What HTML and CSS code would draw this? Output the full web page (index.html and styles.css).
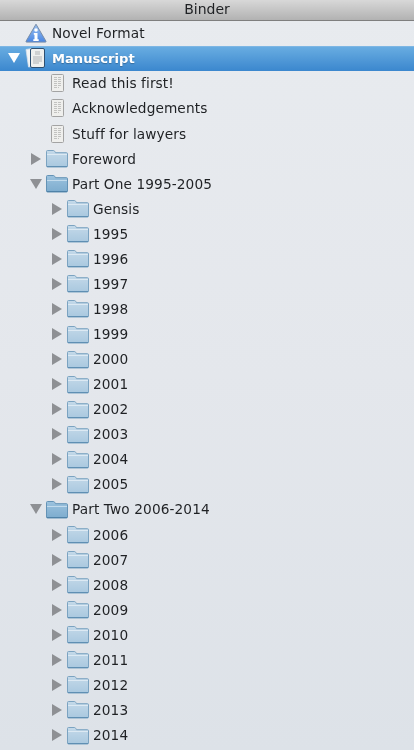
FILE: index.html
```html
<!DOCTYPE html>
<html lang="en">
<head>
    <meta charset="UTF-8">
    <meta name="viewport" content="width=device-width, initial-scale=1.0">
    <title>Binder</title>
    <link rel="stylesheet" href="styles.css">
</head>
<body>
    <!-- shared icons -->
    <svg class="defs" width="0" height="0">
        <defs>
            <linearGradient id="folderBody" x1="0" y1="0" x2="0" y2="1">
                <stop offset="0" stop-color="#c4d9e9"/>
                <stop offset="1" stop-color="#a9c8df"/>
            </linearGradient>
            <linearGradient id="folderOpen" x1="0" y1="0" x2="0" y2="1">
                <stop offset="0" stop-color="#9cc2de"/>
                <stop offset="1" stop-color="#7dacce"/>
            </linearGradient>
            <linearGradient id="warnBody" x1="0" y1="0" x2="0" y2="1">
                <stop offset="0" stop-color="#9cc2f2"/>
                <stop offset="1" stop-color="#4a86e2"/>
            </linearGradient>
            <symbol id="folder" viewBox="0 0 22 19">
                <path d="M.5 17V2.500q0-1 1-1h6q.8 0 1.300 1l.7 1.200h11q1 0 1 1V17q0 1-1 1h-19q-1 0-1-1z" fill="url(#folderBody)" stroke="#7ba3c1"/>
                <path d="M1 5.500h20" stroke="#dce9f3" fill="none"/>
                <path d="M1 17.500h20" stroke="#5f8fb3" fill="none"/>
            </symbol>
            <symbol id="folder-open" viewBox="0 0 22 19">
                <path d="M.5 17V2.500q0-1 1-1h6q.8 0 1.300 1l.7 1.200h11q1 0 1 1V17q0 1-1 1h-19q-1 0-1-1z" fill="url(#folderOpen)" stroke="#6493b6"/>
                <path d="M1 6.500h20" stroke="#c3dbec" fill="none"/>
                <path d="M1 17.500h20" stroke="#4f82a8" fill="none"/>
            </symbol>
            <symbol id="doc" viewBox="0 0 13 18">
                <rect x=".5" y=".5" width="12" height="17" rx="1" fill="#efefed" stroke="#a3a3a3"/>
                <path d="M3 3.500h7M3 5.500h7M3 7.500h7M3 9.500h7M3 11.500h7M3 13.500h5" stroke="#c2c2c0" stroke-dasharray="3 1"/>
            </symbol>
        </defs>
    </svg>

    <div class="binder">
        <div class="binder-title">Binder</div>

        <div class="row level-0">
            <span class="arrow"></span>
            <span class="icon">
                <svg width="22" height="20" viewBox="0 0 22 20">
                    <path d="M11 1.200L21 18.300q.3.800-.6.800H1.600q-.9 0-.6-.8z" fill="url(#warnBody)" stroke="#7a8ea8"/>
                    <circle cx="11" cy="7" r="1.800" fill="#fff"/>
                    <path d="M8.800 10h3.700v6.300h1.200v1.700H8.300v-1.700h1.200v-4.600h-.7z" fill="#fff"/>
                </svg>
            </span>
            <span class="label">Novel Format</span>
        </div>

        <div class="row level-0 selected">
            <span class="arrow down white"></span>
            <span class="icon">
                <svg width="22" height="22" viewBox="0 0 22 22">
                    <path d="M1 2.500l6-1v18l-3.500.5z" fill="#f3f5f6" stroke="#d5e0ea" stroke-width=".8"/>
                    <rect x="5.500" y="1.500" width="14" height="19" rx="1.500" fill="#eff0ee" stroke="#2e4f70"/>
                    <path d="M10 5h5M10 7h5M8 10h9M8 12h9M8 14h9M8 16h6" stroke="#b0b3b5"/>
                </svg>
            </span>
            <span class="label">Manuscript</span>
        </div>

        <div class="row level-1"><span class="arrow"></span><span class="icon"><svg width="13" height="18"><use href="#doc"/></svg></span><span class="label">Read this first!</span></div>
        <div class="row level-1"><span class="arrow"></span><span class="icon"><svg width="13" height="18"><use href="#doc"/></svg></span><span class="label">Acknowledgements</span></div>
        <div class="row level-1"><span class="arrow"></span><span class="icon"><svg width="13" height="18"><use href="#doc"/></svg></span><span class="label">Stuff for lawyers</span></div>
        <div class="row level-1"><span class="arrow right"></span><span class="icon"><svg width="22" height="19"><use href="#folder"/></svg></span><span class="label">Foreword</span></div>

        <div class="row level-1"><span class="arrow down"></span><span class="icon"><svg width="22" height="19"><use href="#folder-open"/></svg></span><span class="label">Part One 1995-2005</span></div>
        <div class="row level-2"><span class="arrow right"></span><span class="icon"><svg width="22" height="19"><use href="#folder"/></svg></span><span class="label">Gensis</span></div>
        <div class="row level-2"><span class="arrow right"></span><span class="icon"><svg width="22" height="19"><use href="#folder"/></svg></span><span class="label">1995</span></div>
        <div class="row level-2"><span class="arrow right"></span><span class="icon"><svg width="22" height="19"><use href="#folder"/></svg></span><span class="label">1996</span></div>
        <div class="row level-2"><span class="arrow right"></span><span class="icon"><svg width="22" height="19"><use href="#folder"/></svg></span><span class="label">1997</span></div>
        <div class="row level-2"><span class="arrow right"></span><span class="icon"><svg width="22" height="19"><use href="#folder"/></svg></span><span class="label">1998</span></div>
        <div class="row level-2"><span class="arrow right"></span><span class="icon"><svg width="22" height="19"><use href="#folder"/></svg></span><span class="label">1999</span></div>
        <div class="row level-2"><span class="arrow right"></span><span class="icon"><svg width="22" height="19"><use href="#folder"/></svg></span><span class="label">2000</span></div>
        <div class="row level-2"><span class="arrow right"></span><span class="icon"><svg width="22" height="19"><use href="#folder"/></svg></span><span class="label">2001</span></div>
        <div class="row level-2"><span class="arrow right"></span><span class="icon"><svg width="22" height="19"><use href="#folder"/></svg></span><span class="label">2002</span></div>
        <div class="row level-2"><span class="arrow right"></span><span class="icon"><svg width="22" height="19"><use href="#folder"/></svg></span><span class="label">2003</span></div>
        <div class="row level-2"><span class="arrow right"></span><span class="icon"><svg width="22" height="19"><use href="#folder"/></svg></span><span class="label">2004</span></div>
        <div class="row level-2"><span class="arrow right"></span><span class="icon"><svg width="22" height="19"><use href="#folder"/></svg></span><span class="label">2005</span></div>

        <div class="row level-1"><span class="arrow down"></span><span class="icon"><svg width="22" height="19"><use href="#folder-open"/></svg></span><span class="label">Part Two 2006-2014</span></div>
        <div class="row level-2"><span class="arrow right"></span><span class="icon"><svg width="22" height="19"><use href="#folder"/></svg></span><span class="label">2006</span></div>
        <div class="row level-2"><span class="arrow right"></span><span class="icon"><svg width="22" height="19"><use href="#folder"/></svg></span><span class="label">2007</span></div>
        <div class="row level-2"><span class="arrow right"></span><span class="icon"><svg width="22" height="19"><use href="#folder"/></svg></span><span class="label">2008</span></div>
        <div class="row level-2"><span class="arrow right"></span><span class="icon"><svg width="22" height="19"><use href="#folder"/></svg></span><span class="label">2009</span></div>
        <div class="row level-2"><span class="arrow right"></span><span class="icon"><svg width="22" height="19"><use href="#folder"/></svg></span><span class="label">2010</span></div>
        <div class="row level-2"><span class="arrow right"></span><span class="icon"><svg width="22" height="19"><use href="#folder"/></svg></span><span class="label">2011</span></div>
        <div class="row level-2"><span class="arrow right"></span><span class="icon"><svg width="22" height="19"><use href="#folder"/></svg></span><span class="label">2012</span></div>
        <div class="row level-2"><span class="arrow right"></span><span class="icon"><svg width="22" height="19"><use href="#folder"/></svg></span><span class="label">2013</span></div>
        <div class="row level-2"><span class="arrow right"></span><span class="icon"><svg width="22" height="19"><use href="#folder"/></svg></span><span class="label">2014</span></div>
    </div>
</body>
</html>
```

FILE: styles.css
```css
html, body {
    margin: 0;
    height: 100%;
    overflow: hidden;
}

body {
    font-family: 'DejaVu Sans', 'Liberation Sans', sans-serif;
    font-size: 13.7px;
    letter-spacing: 0.1px;
    color: #1f2124;
}

.defs {
    position: absolute;
}

.binder {
    height: 750px;
    background: linear-gradient(to bottom, #e8ebef 0%, #e4e7ec 50%, #dde2e8 100%);
    overflow: hidden;
    filter: blur(0.35px);
}

.binder-title {
    height: 19.75px;
    line-height: 19px;
    text-align: center;
    font-size: 14px;
    letter-spacing: 0;
    background: linear-gradient(to bottom, #d8d8d8, #b2b2b2);
    border-bottom: 1px solid #7f7f7f;
}

/* tree rows */
.row {
    display: flex;
    align-items: center;
    height: 25.077px;
}

.level-0 { padding-left: 5px; }
.level-1 { padding-left: 25px; }
.level-2 { padding-left: 46px; }

.selected {
    background: linear-gradient(to bottom, #6aaee2, #3b87ce);
    box-shadow: inset 0 1px 0 #7db6e4;
    color: #fff;
    font-size: 13.1px;
    font-weight: 700;
    letter-spacing: 0;
    text-shadow: 0 1px 1px rgba(0,0,0,0.25);
}

.arrow {
    flex: none;
    width: 21px;
    height: 14px;
    display: flex;
    align-items: center;
}

.arrow.right::before {
    content: "";
    margin-left: 6px;
    border-left: 10px solid #8e9094;
    border-top: 6px solid transparent;
    border-bottom: 6px solid transparent;
}

.arrow.down::before {
    content: "";
    margin-left: 5px;
    border-top: 10px solid #8e9094;
    border-left: 6px solid transparent;
    border-right: 6px solid transparent;
}

.arrow.down.white::before {
    margin-left: 3px;
    border-top-color: #fff;
}

.level-0 .arrow {
    width: 20px;
}

.icon {
    flex: none;
    width: 22px;
    display: flex;
    justify-content: center;
    align-items: center;
    margin-right: 4px;
}

.level-0 .icon {
    margin-right: 5px;
}

.icon svg {
    display: block;
}

.label {
    white-space: nowrap;
}
```
